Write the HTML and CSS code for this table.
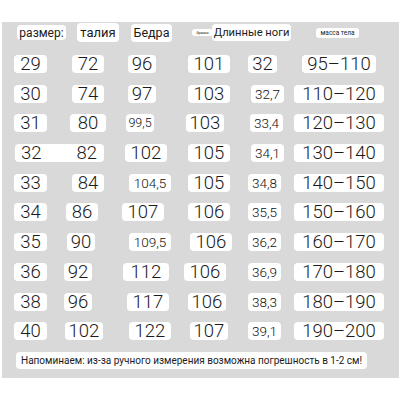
FILE: index.html
```html
<!DOCTYPE html>
<html lang="ru">
<head>
<meta charset="utf-8">
<title>Таблица размеров</title>
<link rel="stylesheet" href="styles.css">
</head>
<body>
<div class="panel">
  <div class="head">
    <span class="hb h-size">размер:</span>
    <span class="hb h-waist">талия</span>
    <span class="hb h-hips">Бедра</span>
    <span class="hb h-tiny">брюки</span>
    <span class="hb h-legs">Длинные ноги</span>
    <span class="hb h-mass">масса тела</span>
  </div>

  <div class="table">
    <span class="b">29</span><span class="b r4">72</span><span class="b tight l4">96</span><span class="b">101</span><span class="b tight l2">32</span><span class="b range n95">95–110</span>
    <span class="b">30</span><span class="b r4">74</span><span class="b tight l4">97</span><span class="b">103</span><span class="b sm r3">32,7</span><span class="b range">110–120</span>
    <span class="b">31</span><span class="b wide r4">80</span><span class="b xs l6">99,5</span><span class="b tight l4">103</span><span class="b sm r2">33,4</span><span class="b range">120–130</span>
    <span class="b pair"><span>32</span><span>82</span></span><span class="b">102</span><span class="b">105</span><span class="b sm r3">34,1</span><span class="b range">130–140</span>
    <span class="b">33</span><span class="b r4">84</span><span class="b md r4">104,5</span><span class="b">105</span><span class="b sm">34,8</span><span class="b range">140–150</span>
    <span class="b">34</span><span class="b l2">86</span><span class="b l3">107</span><span class="b">106</span><span class="b sm">35,5</span><span class="b range">150–160</span>
    <span class="b">35</span><span class="b tight l3">90</span><span class="b md r4">109,5</span><span class="b r2">106</span><span class="b sm">36,2</span><span class="b range">160–170</span>
    <span class="b">36</span><span class="b tight l6">92</span><span class="b wide">112</span><span class="b l4">106</span><span class="b sm">36,9</span><span class="b range">170–180</span>
    <span class="b">38</span><span class="b tight l6">96</span><span class="b r2">117</span><span class="b tight l2">106</span><span class="b sm">38,3</span><span class="b range">180–190</span>
    <span class="b">40</span><span class="b tight">102</span><span class="b r4">122</span><span class="b tight">107</span><span class="b sm">39,1</span><span class="b range">190–200</span>
  </div>

  <p class="note">Напоминаем: из-за ручного измерения возможна погрешность в 1-2 см!</p>
</div>
</body>
</html>
```

FILE: styles.css
```css
* { box-sizing: border-box; }

html, body {
  margin: 0;
  padding: 0;
  background: #ffffff;
}

body {
  font-family: Roboto, "Noto Sans", sans-serif;
  font-weight: 300;
  color: #1b1b1b;
}

.panel {
  margin: 22px 0 0 2px;
  width: 397px;
  background: #d9d9d9;
  padding: 1px 0 9px 0;
  display: flex;
  flex-direction: column;
}

/* header row */
.head {
  display: flex;
  align-items: center;
  height: 19px;
  margin-bottom: 13px;
}

.hb {
  background: #ffffff;
  border-radius: 4px;
  display: flex;
  align-items: center;
  justify-content: center;
  white-space: nowrap;
  font-size: 12px;
  font-weight: 400;
}

.h-size  { width: 49px; height: 15px; margin-left: 15px; }
.h-waist { width: 42px; height: 19px; margin-left: 11px; font-size: 13px; }
.h-hips  { width: 41px; height: 18px; margin-left: 12px; font-size: 12.5px; }
.h-tiny  { width: 21px; height: 7px; margin-left: 20px; font-size: 4px; border-radius: 3px; }
.h-legs  { width: 79px; height: 17px; margin-left: -1px; font-size: 11.2px; }
.h-mass  { width: 43px; height: 10px; margin-left: 25px; font-size: 6.5px; border-radius: 3px; }

/* data grid */
.table {
  display: grid;
  grid-template-columns: 53px 54px 70px 56px 55px 94px;
  grid-auto-rows: 18px;
  row-gap: 11.7px;
  margin-left: 2px;
  justify-items: center;
  align-items: center;
}

.b {
  background: #ffffff;
  border-radius: 4px;
  height: 18px;
  line-height: 18px;
  font-size: 18.5px;
  padding: 0 6px;
  white-space: nowrap;
  text-align: center;
}

.b.tight { padding: 0 4px; }
.b.wide  { padding: 0 8px; }
.b.range { padding: 0 8px; }
.b.range.n95 { padding: 0 5px; }

.b.sm {
  font-size: 13.5px;
  color: #111111;
  padding: 0 4px;
}
.b.xs {
  font-size: 12.5px;
  color: #111111;
  padding: 0 2.5px;
}
.b.md {
  font-size: 13.5px;
  color: #111111;
  padding: 0 5px;
}

.b.pair {
  grid-column: 1 / 3;
  justify-self: start;
  margin-left: 11px;
  width: 89px;
  padding: 0 7px 0 6px;
  display: flex;
  justify-content: space-between;
}

/* small per-cell nudges of centred boxes */
.r2 { margin-left: 4px; }
.r3 { margin-left: 6px; }
.r4 { margin-left: 8px; }
.l2 { margin-right: 4px; }
.l3 { margin-right: 6px; }
.l4 { margin-right: 8px; }
.l6 { margin-right: 12px; }

.note {
  margin: 12px 0 0 14px;
  width: 351px;
  height: 17px;
  background: #ffffff;
  border-radius: 4px;
  font-size: 10px;
  font-weight: 400;
  line-height: 17px;
  padding: 0 0 0 5px;
  white-space: nowrap;
}
```
